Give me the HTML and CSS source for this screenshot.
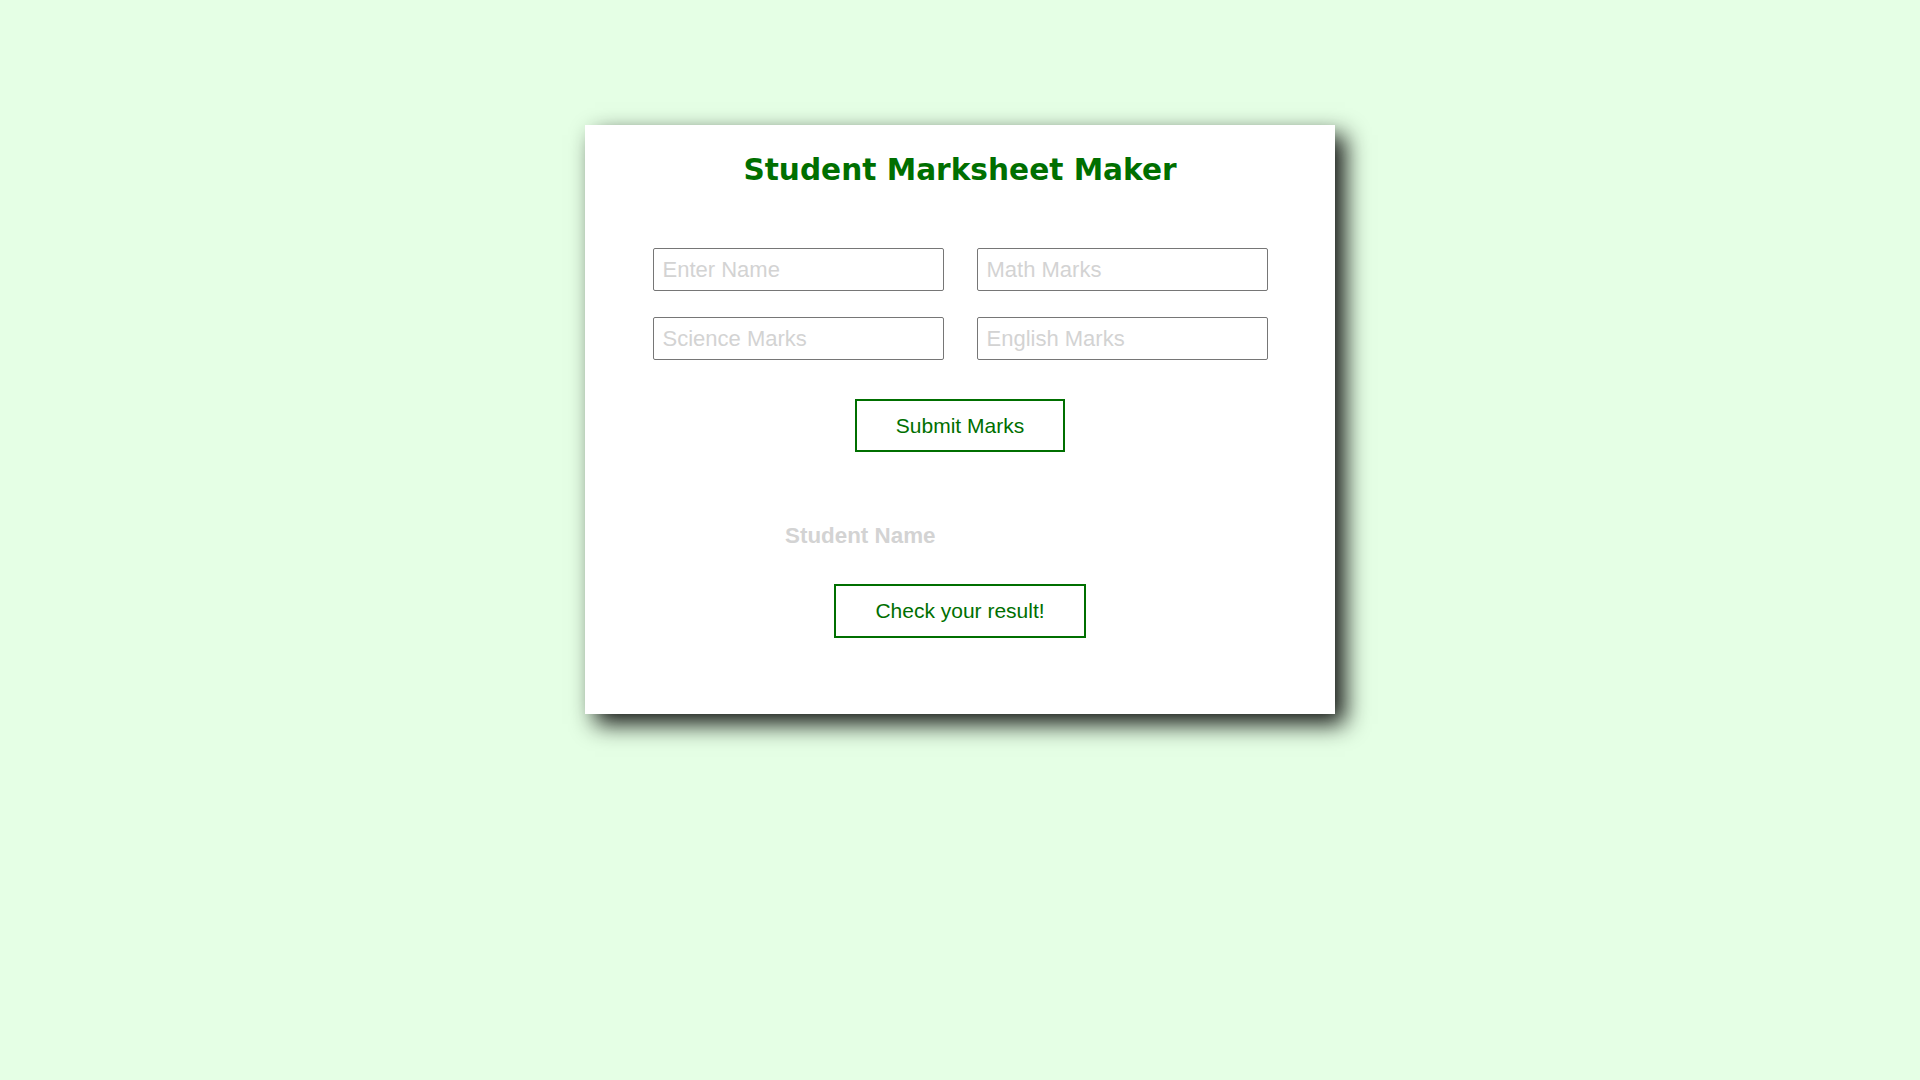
FILE: index.html
```html
<!DOCTYPE html>
<html lang="en">
<head>
<meta charset="utf-8">
<title>Student Marksheet Maker</title>
<link rel="stylesheet" href="styles.css">
</head>
<body>
<div class="card">
  <h1 class="title">Student Marksheet Maker</h1>
  <div class="fields">
    <input class="field" type="text" placeholder="Enter Name">
    <input class="field" type="text" placeholder="Math Marks">
    <input class="field" type="text" placeholder="Science Marks">
    <input class="field" type="text" placeholder="English Marks">
  </div>
  <div class="actions">
    <button class="btn" type="button">Submit Marks</button>
  </div>
  <div class="result-name">Student Name</div>
  <div class="actions check">
    <button class="btn btn-check" type="button">Check your result!</button>
  </div>
</div>
</body>
</html>
```
FILE: styles.css
```css
html, body {
  margin: 0;
  padding: 0;
}
body {
  background: #e5ffe5;
  font-family: "Liberation Sans", Arial, sans-serif;
  min-height: 1080px;
  overflow: hidden;
}
.card {
  width: 750px;
  margin: 125px auto 0;
  background: #ffffff;
  box-shadow: 10px 10px 22px rgba(0, 0, 0, 0.92);
  padding: 28px 0 76px;
  box-sizing: border-box;
}
.title {
  margin: 0;
  text-align: center;
  font-family: "DejaVu Sans", Verdana, sans-serif;
  font-weight: bold;
  font-size: 29.6px;
  line-height: 35px;
  color: #006f00;
}
.fields {
  margin-top: 60px;
  display: grid;
  grid-template-columns: 291px 291px;
  justify-content: center;
  column-gap: 33px;
  row-gap: 26px;
}
.field {
  box-sizing: border-box;
  width: 291px;
  height: 43px;
  padding: 8px 9px;
  border: 1px solid #767676;
  border-radius: 2px;
  font-family: "Liberation Sans", Arial, sans-serif;
  font-size: 22px;
  color: #333;
  background: #fff;
  outline: none;
}
.field::placeholder {
  color: #d3d3d3;
  opacity: 1;
}
.actions {
  margin-top: 39px;
  display: flex;
  justify-content: center;
}
.btn {
  font-family: "Liberation Sans", Arial, sans-serif;
  font-size: 21px;
  line-height: 25px;
  color: #006f00;
  background: #ffffff;
  border: 2px solid #006f00;
  padding: 12px 39px;
  border-radius: 0;
  cursor: pointer;
}
.result-name {
  margin: 71px 0 0 200px;
  font-weight: bold;
  font-size: 22.4px;
  line-height: 26px;
  color: #d3d3d3;
}
.actions.check {
  margin-top: 35px;
}
.btn-check {
  line-height: 26px;
}
```
